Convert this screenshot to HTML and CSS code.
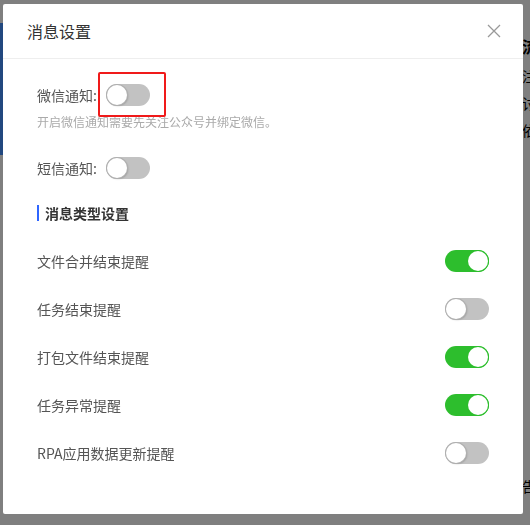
FILE: index.html
```html
<!DOCTYPE html>
<html lang="zh-CN">
  <head>
    <meta charset="UTF-8" />
    <meta name="viewport" content="width=device-width, initial-scale=1.0" />
    <title>消息设置</title>
    <link rel="stylesheet" href="styles.css">
  </head>
  <body>
    <div class="page">
      <div class="banner"></div>
      <div class="side-text">
        <p class="big">流程</p>
        <p>注册</p>
        <p>讨论</p>
        <p>依赖</p>
        <p class="last">告警</p>
      </div>
    </div>
    <div class="mask">
      <div class="dialog">
        <div class="dialog-head">
          <h2>消息设置</h2>
          <span class="close">
            <svg width="14" height="14" viewBox="0 0 14 14">
              <path d="M1 1L13 13M13 1L1 13" stroke="#999" stroke-width="1.3" fill="none" />
            </svg>
          </span>
        </div>
        <div class="dialog-body">
          <div class="field">
            <label>微信通知:</label>
            <span class="mark">
              <span class="switch"></span>
            </span>
          </div>
          <p class="hint">开启微信通知需要先关注公众号并绑定微信。</p>
          <div class="field sms">
            <label>短信通知:</label>
            <span class="switch"></span>
          </div>
          <h3 class="section">消息类型设置</h3>
          <ul class="list">
            <li><span>文件合并结束提醒</span><span class="switch on"></span></li>
            <li><span>任务结束提醒</span><span class="switch"></span></li>
            <li><span>打包文件结束提醒</span><span class="switch on"></span></li>
            <li><span>任务异常提醒</span><span class="switch on"></span></li>
            <li><span>RPA应用数据更新提醒</span><span class="switch"></span></li>
          </ul>
        </div>
      </div>
    </div>
  </body>
</html>
```

FILE: styles.css
```css
* {
  box-sizing: border-box;
}
html,
body {
  margin: 0;
  height: 100%;
  overflow: hidden;
}
body {
  font-family: "Noto Sans CJK SC", "Noto Sans", sans-serif;
  background: #fff;
}
.page {
  display: flex;
  justify-content: space-between;
  height: 100%;
}
.banner {
  width: 200px;
  height: 132px;
  margin-top: 23px;
  background: #4490ff;
}
.side-text {
  margin-right: -22px;
  padding-top: 36px;
  width: 30px;
  color: #000;
  font-size: 14px;
}
.side-text p {
  margin: 0 0 10px;
  line-height: 17px;
  white-space: nowrap;
}
.side-text .big {
  font-size: 16px;
  font-weight: bold;
  line-height: 20px;
  margin-bottom: 12px;
}
.side-text .last {
  margin-top: 339px;
}
.mask {
  position: fixed;
  inset: 0;
  background: rgba(0, 0, 0, 0.5);
  padding: 4px 0 0 3px;
}
.dialog {
  width: 520px;
  height: 510px;
  background: #fff;
  border-radius: 2px;
  display: flex;
  flex-direction: column;
}
.dialog-head {
  height: 55px;
  display: flex;
  align-items: center;
  justify-content: space-between;
  padding: 0 22px 0 24px;
  border-bottom: 1px solid #eee;
}
.dialog-head h2 {
  margin: 0;
  font-size: 16px;
  font-weight: normal;
  color: #333;
}
.close {
  display: flex;
}
.dialog-body {
  padding: 25px 34px 0;
  color: #555;
  font-size: 14px;
}
.field {
  display: flex;
  align-items: center;
  height: 22px;
}
.field label {
  margin-right: 9px;
}
.sms {
  margin-top: 26px;
}
.hint {
  margin: 7px 0 0;
  font-size: 12px;
  line-height: 18px;
  color: #aaa;
}
.mark {
  position: relative;
  display: flex;
}
.mark::after {
  content: "";
  position: absolute;
  left: -8px;
  top: -12px;
  width: 64px;
  height: 41px;
  border: 2px solid #f01a1a;
  border-radius: 2px;
}
.switch {
  position: relative;
  display: inline-block;
  width: 44px;
  height: 22px;
  border-radius: 11px;
  background: #c2c2c2;
}
.switch::after {
  content: "";
  position: absolute;
  top: 1px;
  left: 1px;
  width: 20px;
  height: 20px;
  border-radius: 50%;
  background: #fff;
  box-shadow: 0 0 0 1px #b0b0b0, 1px 1px 2px rgba(0, 0, 0, 0.25);
}
.switch.on {
  background: #2dbe2d;
}
.switch.on::after {
  left: 23px;
  box-shadow: 0 0 0 1px #2dbe2d;
}
.section {
  margin: 26px 0 0;
  padding-left: 6px;
  border-left: 2px solid #2f66ff;
  font-size: 14px;
  font-weight: bold;
  line-height: 16px;
  color: #333;
}
.list {
  list-style: none;
  margin: 16px 0 0;
  padding: 0;
}
.list li {
  height: 48px;
  display: flex;
  align-items: center;
  justify-content: space-between;
}
```
